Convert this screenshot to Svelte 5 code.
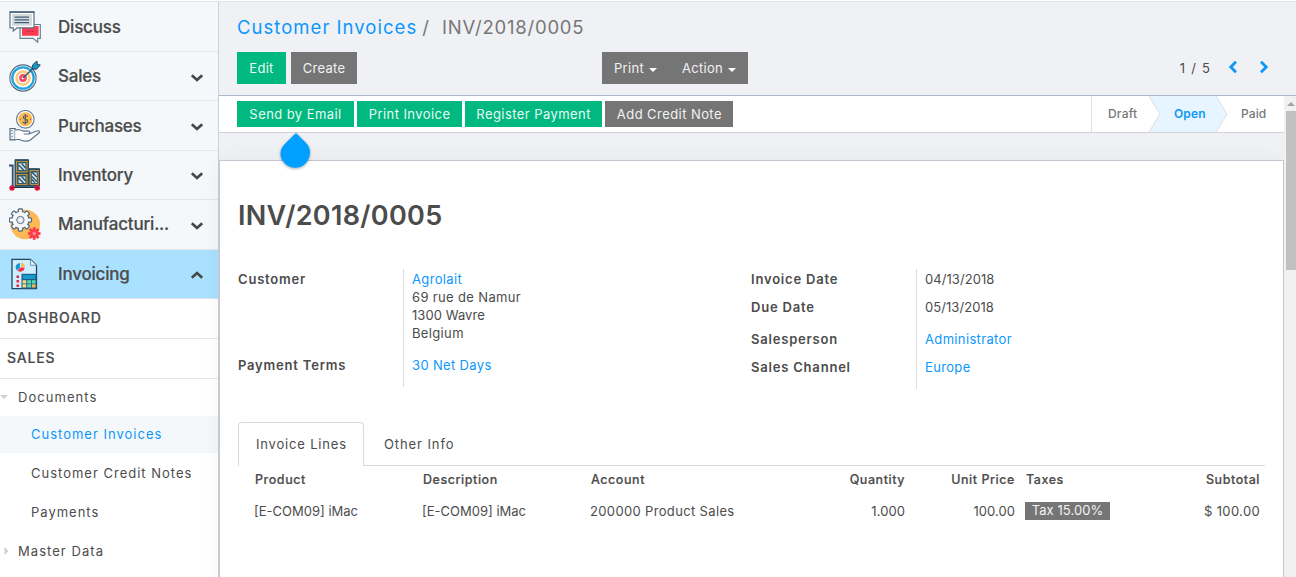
<script>
  const apps = [
    { name: 'Discuss', icon: 'discuss' },
    { name: 'Sales', icon: 'sales', caret: true },
    { name: 'Purchases', icon: 'purchases', caret: true },
    { name: 'Inventory', icon: 'inventory', caret: true },
    { name: 'Manufacturi...', icon: 'manufacturing', caret: true },
    { name: 'Invoicing', icon: 'invoicing', caret: true, open: true }
  ];
  const documents = [
    { name: 'Customer Invoices', active: true },
    { name: 'Customer Credit Notes' },
    { name: 'Payments' }
  ];
  const actions = [
    { name: 'Send by Email', width: 117 },
    { name: 'Print Invoice', width: 104.5 },
    { name: 'Register Payment', width: 137 },
    { name: 'Add Credit Note', width: 128, grey: true }
  ];
  const teeth = [0, 45, 90, 135, 180, 225, 270, 315];
</script>

<div class="page">
  <div class="topline"></div>
  <div class="body">
    <nav class="sidebar">
      {#each apps as app}
        <div class="app" class:open={app.open}>
          <svg class="icon" viewBox="0 0 32 32" width="32" height="32">
            {#if app.icon === 'discuss'}
              <path d="M11 13.5h20.3v13.8h-2.6v4l-4.5-4H11z" fill="#f5f8fa" stroke="#6c8093" stroke-width="1.2" />
              <path d="M13 15h16.6v9.8H13z" fill="#fc3a52" />
              <path d="M18 20.3h7" stroke="#b32c43" stroke-width="1.2" stroke-dasharray="1.5 1" />
              <path d="M1 1.2h24v15.6H8.2L4.3 20v-3.2H1z" fill="#fff" stroke="#5b7186" stroke-width="1.2" />
              <path d="M.5 1h25" stroke="#254260" stroke-width="1" />
              <path d="M3 3h20v11.8H3z" fill="#d3dae0" />
              <path d="M5.5 6.2h14.5M5.5 8.9h14.5M5.5 11.6h14.5" stroke="#475f77" stroke-width="1.2" />
            {:else if app.icon === 'sales'}
              <circle cx="14" cy="18" r="13.1" fill="#fff" stroke="#51687f" stroke-width="1.1" />
              <circle cx="14" cy="18" r="10.7" fill="#fff" stroke="#24a4dd" stroke-width="2.3" />
              <circle cx="14" cy="18" r="6.5" fill="#fff" stroke="#fdc97c" stroke-width="2.5" />
              <circle cx="14" cy="18" r="3.9" fill="#f54a62" />
              <circle cx="14" cy="18" r="1.3" fill="#fff" />
              <path d="M14 18 25 7.5" stroke="#3b536c" stroke-width="1.4" />
              <path d="m23 9 .5-4 4.4-4 .4 3.6 3 .3-3.8 4.3z" fill="#1898c9" stroke="#243f5c" />
            {:else if app.icon === 'purchases'}
              <circle cx="16.3" cy="9.3" r="8.8" fill="#fff" stroke="#647a8d" stroke-width="1.1" />
              <circle cx="16.3" cy="9.3" r="7" fill="#fdb94e" />
              <path d="M18.8 6.6c-1-1.3-4.6-1.2-4.6.8 0 2.3 4.5 1.2 4.5 3.8 0 2.1-3.8 2.3-5 .6M16.3 4v10.5M10.8 9.4h1M21 9.4h1" fill="none" stroke="#52616c" stroke-width="1.2" />
              <path d="M1 18.5h5.2v11.4H1z" fill="#e7ecf0" stroke="#4e6780" stroke-width="1.1" />
              <path d="M3 20v1m0 2v1m0 2v1" stroke="#4e6780" />
              <path d="M6.2 20c3.8-1.3 5.4-.3 8.2 1.2h4.8c2.2 0 2.1 2.8 0 2.8h-4.5 5.2l7.3-2.8c3-1.1 4.3.3 2.3 2L21 30.3c-2.5 1.5-8 .9-10.600-.8H6.2" fill="#fff" stroke="#5b738a" stroke-width="1.2" />
            {:else if app.icon === 'inventory'}
              <path d="M0 6.500h3.700v22" fill="none" stroke="#37516c" stroke-width="1.800" />
              <path d="M6 .700h13.500v13.300H6zM6 14h13.500v13H6zM20 9.700h10.500V27H20z" fill="#2b5265" stroke="#284c60" stroke-width="1" />
              <path d="M7.500 2.500h10.500v10.300H7.500zM7.500 15.500h10.500v10H7.500zM21.200 11.500h8v14h-8z" fill="#2d596b" stroke="#bd923e" stroke-width="1.200" />
              <path d="M9.600 4.300h6.800v6.800H9.600zM9.600 17.600h6.800v6.400H9.600zM22.800 13.500h5v10.500h-5z" fill="#cfe0ea" />
              <path d="m9.600 6 5 5m-2-6.500 4 4.500m-7 10 5 5m-2-6.500 4 4.500m6.200-4.500 5 5m-5-9.500 5 5m-5 2.500 3 3" stroke="#21506b" stroke-width="1.200" />
              <path d="M4 28.200h25" stroke="#15334f" stroke-width="1.600" />
              <circle cx="3" cy="29" r="2.700" fill="#e11442" /><circle cx="28.300" cy="29" r="2.700" fill="#e11442" />
              <circle cx="3" cy="29" r=".9" fill="#7b1c3c" /><circle cx="28.300" cy="29" r=".9" fill="#7b1c3c" />
            {:else if app.icon === 'manufacturing'}
              <circle cx="16.300" cy="16.500" r="14.800" fill="#fdb955" />
              <g fill="#f7f9fb" stroke="#566b7f" stroke-width="1.400">
                {#each teeth as angle}
                  <rect x="9.400" y="1" width="4" height="5" rx=".7" transform="rotate({angle} 11.400 12)" />
                {/each}
                <circle cx="11.400" cy="12" r="8.500" />
              </g>
              {#each teeth as angle}
                <rect x="10" y="1.800" width="2.800" height="5" fill="#f7f9fb" transform="rotate({angle} 11.400 12)" />
              {/each}
              <circle cx="11.400" cy="12" r="7.900" fill="#f4f6f9" />
              <circle cx="11.400" cy="12" r="3.700" fill="#d9e0e8" stroke="#667b90" />
              <circle cx="11.400" cy="12" r="1.700" fill="#fff" />
              <g fill="#fb3d4a">
                {#each teeth as angle}
                  <rect x="23.800" y="19.200" width="2.800" height="4" transform="rotate({angle} 25.200 25.500)" />
                {/each}
                <circle cx="25.200" cy="25.500" r="4.600" />
              </g>
              <circle cx="25.200" cy="25.500" r="1.800" fill="#fd8890" />
            {:else}
              <path d="M3 1.300h18.500l6 6v23.400H3z" fill="#cdeffd" stroke="#23445f" stroke-width="1.300" />
              <path d="M21.500 1.300v6h6z" fill="#e6f3fa" stroke="#6d91a8" />
              <path d="M11 5v4.500l-3.200 3A4.400 4.400 0 0 1 11 5z" fill="#1295d4" />
              <path d="M12 4.500a4.400 4.400 0 0 1 3.800 4.300H12z" fill="#fdb950" />
              <path d="M11.500 9.500h4.200a4.300 4.300 0 0 1-7.200 3z" fill="#f5304d" />
              <path d="M7.500 17.500h2.500v2.500H7.500zM7.500 22h2.500v2.500H7.500zM7.500 26.500h2.500V29H7.500z" fill="#e82350" />
              <path d="M12.500 15.800h15v14.900h-15z" fill="#1d5e7d" />
              <path d="M13.800 17h12.600v4H13.800z" fill="#189bd5" />
              <path d="M13.500 22.200h3.800v3.200h-3.800zm0 4.100h3.800v3.200h-3.800z" fill="#fdd58b" />
              <path d="M18.200 22.200H22v3.200h-3.800zm0 4.100H22v3.200h-3.800zM22.800 22.200h3.800v3.200h-3.800z" fill="#55d9b0" />
              <path d="M22.800 26.300h3.800v3.200h-3.800z" fill="#fcb650" />
            {/if}
          </svg>
          <span class="name">{app.name}</span>
          {#if app.caret}
            <svg class="caret" viewBox="0 0 14 10" width="14" height="10">
              <path d={app.open ? 'm1.800 7.700 5.200-4.700 5.200 4.700' : 'm1.800 2.300 5.200 4.700 5.200-4.700'} />
            </svg>
          {/if}
        </div>
      {/each}
      <div class="section">DASHBOARD</div>
      <div class="section">SALES</div>
      <div class="menu first"><svg viewBox="0 0 8 8" width="8" height="8"><path d="M0 2h8L4 6z" /></svg>Documents</div>
      {#each documents as doc}
        <div class="sub" class:active={doc.active}>{doc.name}</div>
      {/each}
      <div class="menu last"><svg viewBox="0 0 8 8" width="8" height="8"><path d="M4.500 0v8l4-4z" /></svg>Master Data</div>
    </nav>

    <main>
      <header>
        <div class="crumbs"><a href="#list">Customer Invoices</a><span class="slash">/</span><span class="current">INV/2018/0005</span></div>
        <div class="toolbar">
          <div class="left"><button class="green edit">Edit</button><button class="create">Create</button></div>
          <div class="group"><button>Print<i></i></button><button>Action<i></i></button></div>
          <div class="pager">
            <span>1 / 5</span>
            <svg viewBox="0 0 10 14" width="10" height="14"><path d="M8 1.800 2.800 7 8 12.200" /></svg>
            <svg viewBox="0 0 10 14" width="10" height="14"><path d="M2 1.800 7.200 7 2 12.200" /></svg>
          </div>
        </div>
      </header>

      <div class="content">
        <div class="form">
          <div class="statusbar">
            <div class="actions">
              {#each actions as action}
                <button class:green={!action.grey} style:width="{action.width}px">{action.name}</button>
              {/each}
              <svg class="drop" viewBox="0 0 36 44" width="36" height="44">
                <path d="M19 2 29.300 12.200C35 18 33.500 27.500 28.500 32.500A14.600 14.600 0 0 1 7.600 32.300C2 26.500 2.200 18.500 8 12.800z" fill="#019fff" />
              </svg>
            </div>
            <div class="states">
              <span class="draft">Draft</span>
              <svg class="chevrons" viewBox="0 0 80 36" width="80" height="36">
                <path d="M0 0h67l11 18-11 18H0l11-18z" fill="#e6f5ff" />
                <path d="m0 0 11 18L0 36M67 0l11 18-11 18" fill="none" stroke="#dcdfe2" />
              </svg>
              <span class="opened">Open</span>
              <span class="paid">Paid</span>
            </div>
          </div>
          <section class="sheet">
            <h1>INV/2018/0005</h1>
            <div class="groups">
              <div class="fields one">
                <dl>
                  <dt>Customer</dt>
                  <dd><a href="#p">Agrolait</a><br />69 rue de Namur<br /><span class="tight">1300 Wavre</span><br />Belgium</dd>
                  <dt>Payment Terms</dt>
                  <dd><a href="#t">30 Net Days</a></dd>
                </dl>
              </div>
              <div class="fields two">
                <dl>
                  <dt>Invoice Date</dt><dd class="tight">04/13/2018</dd>
                  <dt>Due Date</dt><dd class="tight">05/13/2018</dd>
                  <dt>Salesperson</dt><dd><a href="#u">Administrator</a></dd>
                  <dt>Sales Channel</dt><dd><a href="#c">Europe</a></dd>
                </dl>
              </div>
            </div>
            <div class="tabs"><span class="tab on">Invoice Lines</span><span class="tab">Other Info</span></div>
            <table>
              <thead>
                <tr><th class="c1">Product</th><th class="c2">Description</th><th class="c3">Account</th><th class="c4 r">Quantity</th><th class="c5 r">Unit Price</th><th class="c6">Taxes</th><th class="r">Subtotal</th></tr>
              </thead>
              <tbody>
                <tr><td class="tight">[E-COM09] iMac</td><td class="tight">[E-COM09] iMac</td><td>200000 Product Sales</td><td class="r tight">1.000</td><td class="r tight">100.00</td><td><span class="tag">Tax 15.00%</span></td><td class="r">$ 100.00</td></tr>
              </tbody>
            </table>
          </section>
        </div>
        <div class="scrollbar"><i class="up"></i><i class="thumb"></i></div>
      </div>
    </main>
  </div>
</div>

<style>
  :global(body) { margin: 0; overflow: hidden; background: #fff; }
  * { box-sizing: border-box; }
  .page { width: 1296px; height: 577px; overflow: hidden; display: flex; flex-direction: column; font: 13px/18px Inter, "Open Sans", sans-serif; letter-spacing: .35px; color: #4c4c4c; }
  a { color: #0d97fb; text-decoration: none; }
  .topline { height: 2px; flex: none; background: #fff; border-bottom: 1px solid #e4e5e8; }
  .body { flex: 1; display: flex; min-height: 0; }

  .sidebar { width: 219px; flex: none; border-right: 1px solid #cfcfd9; background: #fff; display: flex; flex-direction: column; white-space: nowrap; }
  .app { height: 49.400px; flex: none; display: flex; align-items: center; padding: 0 14px 0 9px; background: #f5f8fa; border-bottom: 1px solid #e3e6e8; }
  .app:first-child { height: 50px; padding-top: 1px; }
  .app.open { background: #a9e1ff; border-color: #dce6ec; }
  .icon { margin-right: 17px; flex: none; }
  .name { flex: 1; font-size: 17px; font-weight: 500; letter-spacing: -.2px; -webkit-text-stroke: .2px; }
  .caret { flex: none; margin-top: 3px; }
  .caret path { fill: none; stroke: #454748; stroke-width: 2.700; }
  .section { height: 40px; flex: none; padding: 0 7px; line-height: 38px; font-size: 14px; font-weight: 500; -webkit-text-stroke: .2px; border-bottom: 1px solid #e5e5e5; letter-spacing: .8px; }
  .menu { display: flex; align-items: center; gap: 10px; letter-spacing: 1.050px; }
  .menu svg { fill: #d0d0d0; }
  .menu.first { height: 37px; flex: none; padding-bottom: 1px; }
  .menu.last { height: 38px; flex: none; }
  .sub { height: 39px; flex: none; padding-left: 31px; line-height: 39px; letter-spacing: 1px; }
  .sub.active { height: 37px; line-height: 37px; margin-bottom: 1px; background: #f4f8fa; color: #0d97fb; }

  main { flex: 1; display: flex; flex-direction: column; min-width: 0; }
  header { height: 94px; flex: none; padding: 13px 27px 0 18px; background: #f0f1f5; border-bottom: 1px solid #adb9cb; }
  .crumbs { height: 24px; line-height: 24px; font-size: 18.500px; display: flex; letter-spacing: 1.030px; color: #777; }
  .slash { margin: 0 12px 0 5px; }
  .current { letter-spacing: .780px; }
  .toolbar { display: flex; height: 32px; margin-top: 13px; }
  button { height: 32px; padding: 0; border: 0; background: #757575; color: #f2f2f2; font: inherit; letter-spacing: .3px; white-space: nowrap; }
  .toolbar button { padding-bottom: 1px; }
  .green { background: #00b880; color: #e9faf4; }
  .left { display: flex; gap: 5px; width: 365px; }
  .edit { width: 49px; }
  .create { width: 66px; }
  .group { display: flex; background: #757575; width: 146px; padding: 0 12px; justify-content: space-between; }
  .group i { display: inline-block; border: 4px solid transparent; border-top-color: #fff; border-bottom: 0; margin: 0 0 1px 5px; }
  .pager { flex: 1; display: flex; justify-content: flex-end; align-items: center; }
  .pager span { margin-right: 17px; letter-spacing: 1.200px; }
  .pager svg { margin-bottom: 2px; }
  .pager svg + svg { margin-left: 21px; }
  .pager path { fill: none; stroke: #0d97fb; stroke-width: 2.800; }

  .content { flex: 1; display: flex; min-height: 0; background: #f0f1f5; }
  .form { width: 1065px; display: flex; flex-direction: column; }
  .statusbar { height: 37px; flex: none; background: #fff; border-bottom: 1px solid #d3d3d5; display: flex; justify-content: space-between; padding-left: 18px; }
  .actions { display: flex; gap: 3.300px; padding-top: 5px; position: relative; }
  .actions button { height: 26px; letter-spacing: .430px; flex: none; }
  .drop { position: absolute; left: 40px; top: 35px; filter: drop-shadow(0 1px 1.500px #0005); }
  .states { width: 193px; border-left: 1px solid #e2e2e2; display: flex; position: relative; font-size: 12px; font-weight: 500; line-height: 36px; color: #777; }
  .states span { position: relative; }
  .chevrons { position: absolute; left: 57px; top: 0; }
  .draft { width: 82px; padding-left: 16px; letter-spacing: .2px; }
  .opened { width: 67px; color: #0d97fb; font-weight: 600; letter-spacing: .150px; }
  .paid { letter-spacing: .1px; }
  .sheet { flex: 1; margin-top: 27px; background: #fff; border: 1px solid #c6c6d3; border-bottom: 0; padding: 38px 18px 0; box-shadow: 0 0 20px #0000000d; }
  h1 { margin: 0; height: 34px; font-size: 27px; line-height: 34px; font-weight: 600; letter-spacing: .300px; }
  .groups { display: flex; margin-top: 36px; height: 120px; }
  .fields { width: 513px; }
  dl { display: grid; margin: 0; grid-template-columns: 165px 1fr; }
  dt { font-weight: 600; letter-spacing: .8px; padding-top: 1px; }
  dd { margin: 0; padding: 1px 0 0 8px; border-left: 1px solid #ddd; }
  .tight { letter-spacing: .070px; }
  .one dl { grid-template-rows: 86px 32px; }
  .two dl { grid-template-rows: 28px 32px 28px 32px; }
  .tabs { display: flex; height: 44px; border-bottom: 1px solid #d9d9d9; margin: 33px 0 0; }
  .tab { height: 44px; padding: 0 20px; line-height: 44px; letter-spacing: .9px; }
  .tab.on { width: 126px; padding: 0 0 0 17px; border: 1px solid #d9d9d9; border-bottom: 0; border-radius: 4px 4px 0 0; background: #fff; line-height: 43px; letter-spacing: .820px; }
  table { border-collapse: collapse; table-layout: fixed; width: 1027px; white-space: nowrap; }
  th { height: 28px; padding: 0 5px 0 17px; text-align: left; font-weight: 500; font-size: 12.500px; -webkit-text-stroke: .2px; letter-spacing: .560px; }
  td { height: 34px; padding: 0 5px 1px 16px; }
  td.tight:nth-child(-n+2) { letter-spacing: 0; }
  .c1, .c2 { width: 168px; }
  .c3 { width: 166px; }
  .c4 { width: 170px; }
  .c5 { width: 110px; }
  .c6 { width: 100px; }
  th:nth-child(6) { padding-left: 6px; }
  td:nth-child(6) { padding-left: 5px; }
  .r { text-align: right; }
  .tag { display: inline-block; width: 85px; height: 18px; line-height: 17px; background: #757575; color: #f2f2f2; text-align: center; letter-spacing: .050px; }
  .scrollbar { width: 12px; margin-left: auto; background: #f1f1f1; display: flex; flex-direction: column; align-items: flex-end; }
  .up { margin: 6px 1px 5px 0; border: 4px solid transparent; border-top: 0; border-bottom-color: #a3a3a3; }
  .thumb { width: 10px; height: 159px; background: #c1c1c1; }
</style>
